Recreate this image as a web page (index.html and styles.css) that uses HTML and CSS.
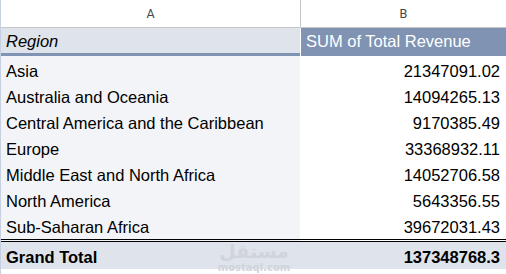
FILE: index.html
```html
<!DOCTYPE html>
<html>
<head>
<meta charset="utf-8">
<link rel="stylesheet" href="styles.css">
</head>
<body>
<div class="sheet">
  <div class="colhead">A</div>
  <div class="colhead colhead-b">B</div>

  <div class="hdr hdr-a">Region</div>
  <div class="hdr hdr-b">SUM of Total Revenue</div>

  <div class="lbl">Asia</div><div class="val">21347091.02</div>
  <div class="lbl">Australia and Oceania</div><div class="val">14094265.13</div>
  <div class="lbl">Central America and the Caribbean</div><div class="val">9170385.49</div>
  <div class="lbl">Europe</div><div class="val">33368932.11</div>
  <div class="lbl">Middle East and North Africa</div><div class="val">14052706.58</div>
  <div class="lbl">North America</div><div class="val">5643356.55</div>
  <div class="lbl last">Sub-Saharan Africa</div><div class="val last">39672031.43</div>

  <div class="tot tot-a">Grand Total</div>
  <div class="tot tot-b">137348768.3</div>

  <div class="watermark">
    <span class="wm-ar">مستقل</span>
    <span class="wm-en">mostaql.com</span>
  </div>
</div>
</body>
</html>
```
FILE: styles.css
```css
html, body {
  margin: 0;
  padding: 0;
  background: #ffffff;
}
body {
  width: 506px;
  height: 274px;
  overflow: hidden;
  font-family: "Liberation Sans", Arial, sans-serif;
}
.sheet {
  position: relative;
  display: grid;
  grid-template-columns: 299px 206px;
  grid-template-rows: 28px 28px repeat(6, 26px) 30px 27px;
  border-left: 1px solid #c6d0e0;
  height: 274px;
  box-sizing: border-box;
}
.colhead {
  font-family: Roboto, "Liberation Sans", sans-serif;
  font-size: 12.5px;
  color: #444746;
  display: flex;
  align-items: center;
  justify-content: center;
  border-bottom: 1px solid #c4c7c5;
  background: #fff;
}
.colhead-b {
  border-left: 1px solid #c4c7c5;
}
.hdr {
  font-size: 16.5px;
  display: flex;
  align-items: center;
  padding: 2px 0 0 5px;
  border-bottom: 3px solid #8093b3;
}
.hdr-a {
  background: #dfe3eb;
  font-style: italic;
  color: #000;
}
.hdr-b {
  background: #8093b3;
  color: #fff;
  margin-left: 1px;
  padding-left: 5px;
}
.lbl, .val {
  font-size: 16.5px;
  color: #000;
  display: flex;
  align-items: center;
  padding-top: 4px;
}
.lbl {
  background: #f3f4f7;
  padding-left: 5px;
}
.val {
  background: #fff;
  justify-content: flex-end;
  padding-right: 6px;
}
.last {
  border-bottom: 3px double #000;
  padding-bottom: 1px;
}
.tot {
  font-size: 16.5px;
  font-weight: bold;
  background: #dfe3eb;
  display: flex;
  align-items: center;
  padding-top: 3px;
}
.tot-a {
  padding-left: 5px;
}
.tot-b {
  justify-content: flex-end;
  padding-right: 6px;
}
.watermark {
  position: absolute;
  left: 220px;
  top: 240px;
  width: 66px;
  display: flex;
  flex-direction: column;
  align-items: center;
  gap: 1px;
  color: #d0d4dc;
  pointer-events: none;
}
.wm-ar {
  font-family: "DejaVu Sans", sans-serif;
  font-weight: bold;
  font-size: 19px;
  line-height: 22px;
}
.wm-en {
  font-family: "DejaVu Sans", sans-serif;
  font-weight: bold;
  font-size: 10px;
  line-height: 10px;
}
```
